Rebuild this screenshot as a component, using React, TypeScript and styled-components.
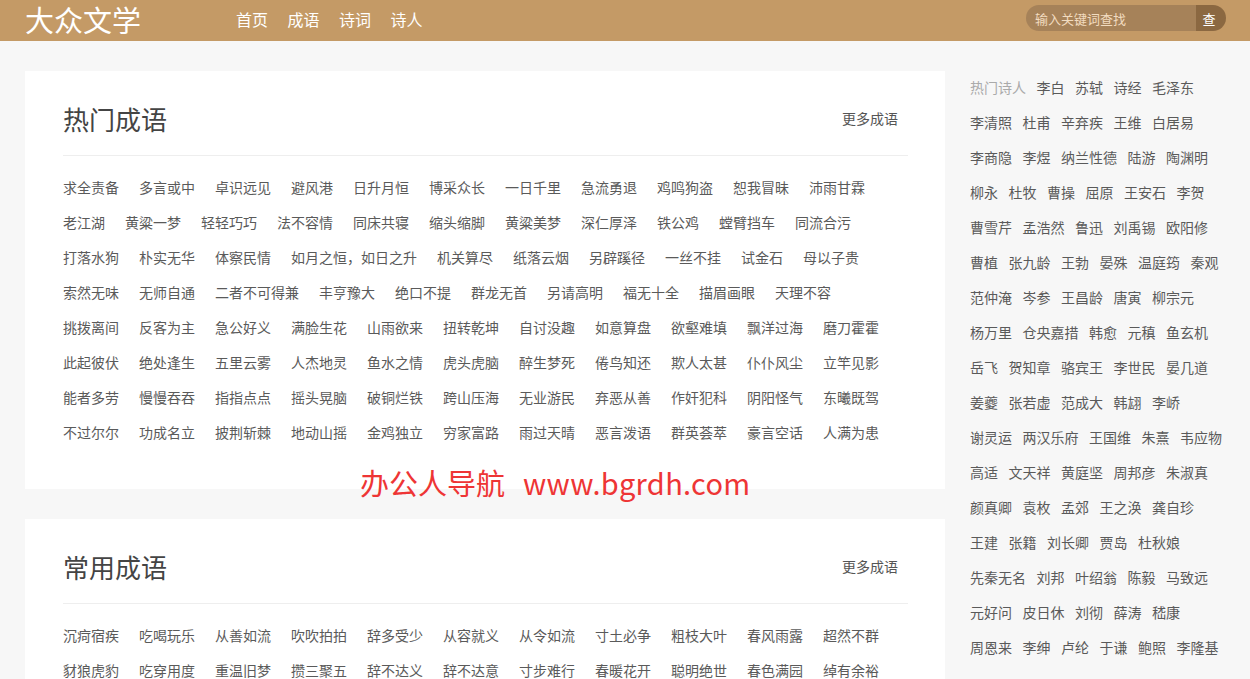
import styled, { createGlobalStyle } from 'styled-components';

const GlobalStyle = createGlobalStyle`
  * { box-sizing: border-box; }
  body {
    margin: 0;
    background: #f7f7f7;
    font-family: "Noto Sans CJK SC", "Noto Sans", sans-serif;
    color: #555;
  }
  a { color: inherit; text-decoration: none; }
`;

const hotIdioms = [
  '求全责备', '多言或中', '卓识远见', '避风港', '日升月恒', '博采众长', '一日千里', '急流勇退', '鸡鸣狗盗', '恕我冒昧', '沛雨甘霖',
  '老江湖', '黄粱一梦', '轻轻巧巧', '法不容情', '同床共寝', '缩头缩脚', '黄粱美梦', '深仁厚泽', '铁公鸡', '螳臂挡车', '同流合污',
  '打落水狗', '朴实无华', '体察民情', '如月之恒，如日之升', '机关算尽', '纸落云烟', '另辟蹊径', '一丝不挂', '试金石', '母以子贵',
  '索然无味', '无师自通', '二者不可得兼', '丰亨豫大', '绝口不提', '群龙无首', '另请高明', '福无十全', '描眉画眼', '天理不容',
  '挑拨离间', '反客为主', '急公好义', '满脸生花', '山雨欲来', '扭转乾坤', '自讨没趣', '如意算盘', '欲壑难填', '飘洋过海', '磨刀霍霍',
  '此起彼伏', '绝处逢生', '五里云雾', '人杰地灵', '鱼水之情', '虎头虎脑', '醉生梦死', '倦鸟知还', '欺人太甚', '仆仆风尘', '立竿见影',
  '能者多劳', '慢慢吞吞', '指指点点', '摇头晃脑', '破铜烂铁', '跨山压海', '无业游民', '弃恶从善', '作奸犯科', '阴阳怪气', '东曦既驾',
  '不过尔尔', '功成名立', '披荆斩棘', '地动山摇', '金鸡独立', '穷家富路', '雨过天晴', '恶言泼语', '群英荟萃', '豪言空话', '人满为患',
];

const commonIdioms = [
  '沉疴宿疾', '吃喝玩乐', '从善如流', '吹吹拍拍', '辞多受少', '从容就义', '从令如流', '寸土必争', '粗枝大叶', '春风雨露', '超然不群',
  '豺狼虎豹', '吃穿用度', '重温旧梦', '攒三聚五', '辞不达义', '辞不达意', '寸步难行', '春暖花开', '聪明绝世', '春色满园', '绰有余裕',
];

const poets = [
  '李白', '苏轼', '诗经', '毛泽东', '李清照', '杜甫', '辛弃疾', '王维', '白居易',
  '李商隐', '李煜', '纳兰性德', '陆游', '陶渊明', '柳永', '杜牧', '曹操', '屈原', '王安石', '李贺',
  '曹雪芹', '孟浩然', '鲁迅', '刘禹锡', '欧阳修', '曹植', '张九龄', '王勃', '晏殊', '温庭筠', '秦观',
  '范仲淹', '岑参', '王昌龄', '唐寅', '柳宗元', '杨万里', '仓央嘉措', '韩愈', '元稹', '鱼玄机',
  '岳飞', '贺知章', '骆宾王', '李世民', '晏几道', '姜夔', '张若虚', '范成大', '韩翃', '李峤',
  '谢灵运', '两汉乐府', '王国维', '朱熹', '韦应物', '高适', '文天祥', '黄庭坚', '周邦彦', '朱淑真',
  '颜真卿', '袁枚', '孟郊', '王之涣', '龚自珍', '王建', '张籍', '刘长卿', '贾岛', '杜秋娘',
  '先秦无名', '刘邦', '叶绍翁', '陈毅', '马致远', '元好问', '皮日休', '刘彻', '薛涛', '嵇康',
  '周恩来', '李绅', '卢纶', '于谦', '鲍照', '李隆基',
];

const sections = [
  { title: '热门成语', items: hotIdioms },
  { title: '常用成语', items: commonIdioms },
];

function App() {
  return (
    <Page>
      <GlobalStyle />
      <Header>
        <HeaderInner>
          <Logo href="#">大众文学</Logo>
          <Nav>
            {['首页', '成语', '诗词', '诗人'].map((n) => (
              <NavLink key={n} href="#">{n}</NavLink>
            ))}
          </Nav>
          <Search>
            <SearchInput placeholder="输入关键词查找" />
            <SearchButton>查</SearchButton>
          </Search>
        </HeaderInner>
      </Header>

      <Main>
        <Content>
          {sections.map((s) => (
            <Card key={s.title}>
              <CardHead>
                <CardTitle>{s.title}</CardTitle>
                <MoreLink href="#">更多成语</MoreLink>
              </CardHead>
              <IdiomList>
                {s.items.map((w, i) => (
                  <Idiom key={i} href="#">{w}</Idiom>
                ))}
              </IdiomList>
            </Card>
          ))}
        </Content>

        <Sidebar>
          <SideLabel>热门诗人</SideLabel>
          {poets.map((p) => (
            <Poet key={p} href="#">{p}</Poet>
          ))}
        </Sidebar>
      </Main>

      <Watermark>
        办公人导航<WatermarkUrl>www.bgrdh.com</WatermarkUrl>
      </Watermark>
    </Page>
  );
}

const Page = styled.div`
  position: relative;
  min-height: 100vh;
`;

const Header = styled.header`
  height: 41px;
  background: #c49a66;
`;

const HeaderInner = styled.div`
  width: 1200px;
  height: 38px;
  margin: 0 auto;
  display: flex;
  align-items: center;
`;

const Logo = styled.a`
  width: 211px;
  font-size: 29px;
  line-height: 38px;
  color: #fff;
  white-space: nowrap;
`;

const Nav = styled.nav`
  display: flex;
  gap: 19.5px;
`;

const NavLink = styled.a`
  font-size: 16px;
  line-height: 36px;
  color: #fff;
`;

const Search = styled.div`
  margin: 0 -1px 2px auto;
  display: flex;
  width: 200px;
  height: 26px;
  border-radius: 13px;
  overflow: hidden;
`;

const SearchInput = styled.input`
  flex: 1;
  min-width: 0;
  border: 0;
  outline: 0;
  padding: 0 0 0 9px;
  background: #a68259;
  font-family: inherit;
  font-size: 13px;
  color: #fff;

  &::placeholder {
    color: #f2dcc0;
  }
`;

const SearchButton = styled.button`
  width: 30px;
  border: 0;
  padding: 0 4px 0 0;
  background: #8b6841;
  color: #fff;
  font-family: inherit;
  font-size: 13px;
  cursor: pointer;
`;

const Main = styled.div`
  width: 1200px;
  margin: 30px auto 0;
  display: flex;
  align-items: flex-start;
  gap: 25px;
`;

const Content = styled.div`
  width: 920px;
  display: flex;
  flex-direction: column;
  gap: 30px;
`;

const Card = styled.section`
  background: #fff;
  padding: 28px 37px 39px 38px;
`;

const CardHead = styled.div`
  display: flex;
  align-items: center;
  justify-content: space-between;
  height: 57px;
  padding-bottom: 16px;
  border-bottom: 1px solid #eee;
`;

const CardTitle = styled.h2`
  margin: 0;
  font-size: 26px;
  font-weight: normal;
  line-height: 40px;
  color: #444;
`;

const MoreLink = styled.a`
  margin: 0 10px 3px 0;
  font-size: 14px;
  color: #555;
`;

const IdiomList = styled.div`
  display: flex;
  flex-wrap: wrap;
  column-gap: 20px;
  padding: 14px 15px 0 0;
`;

const Idiom = styled.a`
  font-size: 14px;
  line-height: 35px;
  color: #5a5a5a;
  white-space: nowrap;
`;

const Sidebar = styled.aside`
  width: 255px;
  display: flex;
  flex-wrap: wrap;
  column-gap: 10.5px;
  margin-top: -1px;
`;

const SideLabel = styled.span`
  font-size: 14px;
  line-height: 35px;
  color: #aaa;
`;

const Poet = styled.a`
  font-size: 14px;
  line-height: 35px;
  color: #5a5a5a;
  white-space: nowrap;
`;

const Watermark = styled.div`
  position: absolute;
  top: 465px;
  left: 360px;
  font-size: 29px;
  line-height: 34px;
  color: #ee3535;
  white-space: nowrap;
  pointer-events: none;
`;

const WatermarkUrl = styled.span`
  margin-left: 18px;
  letter-spacing: 0.3px;
`;

export default App;
